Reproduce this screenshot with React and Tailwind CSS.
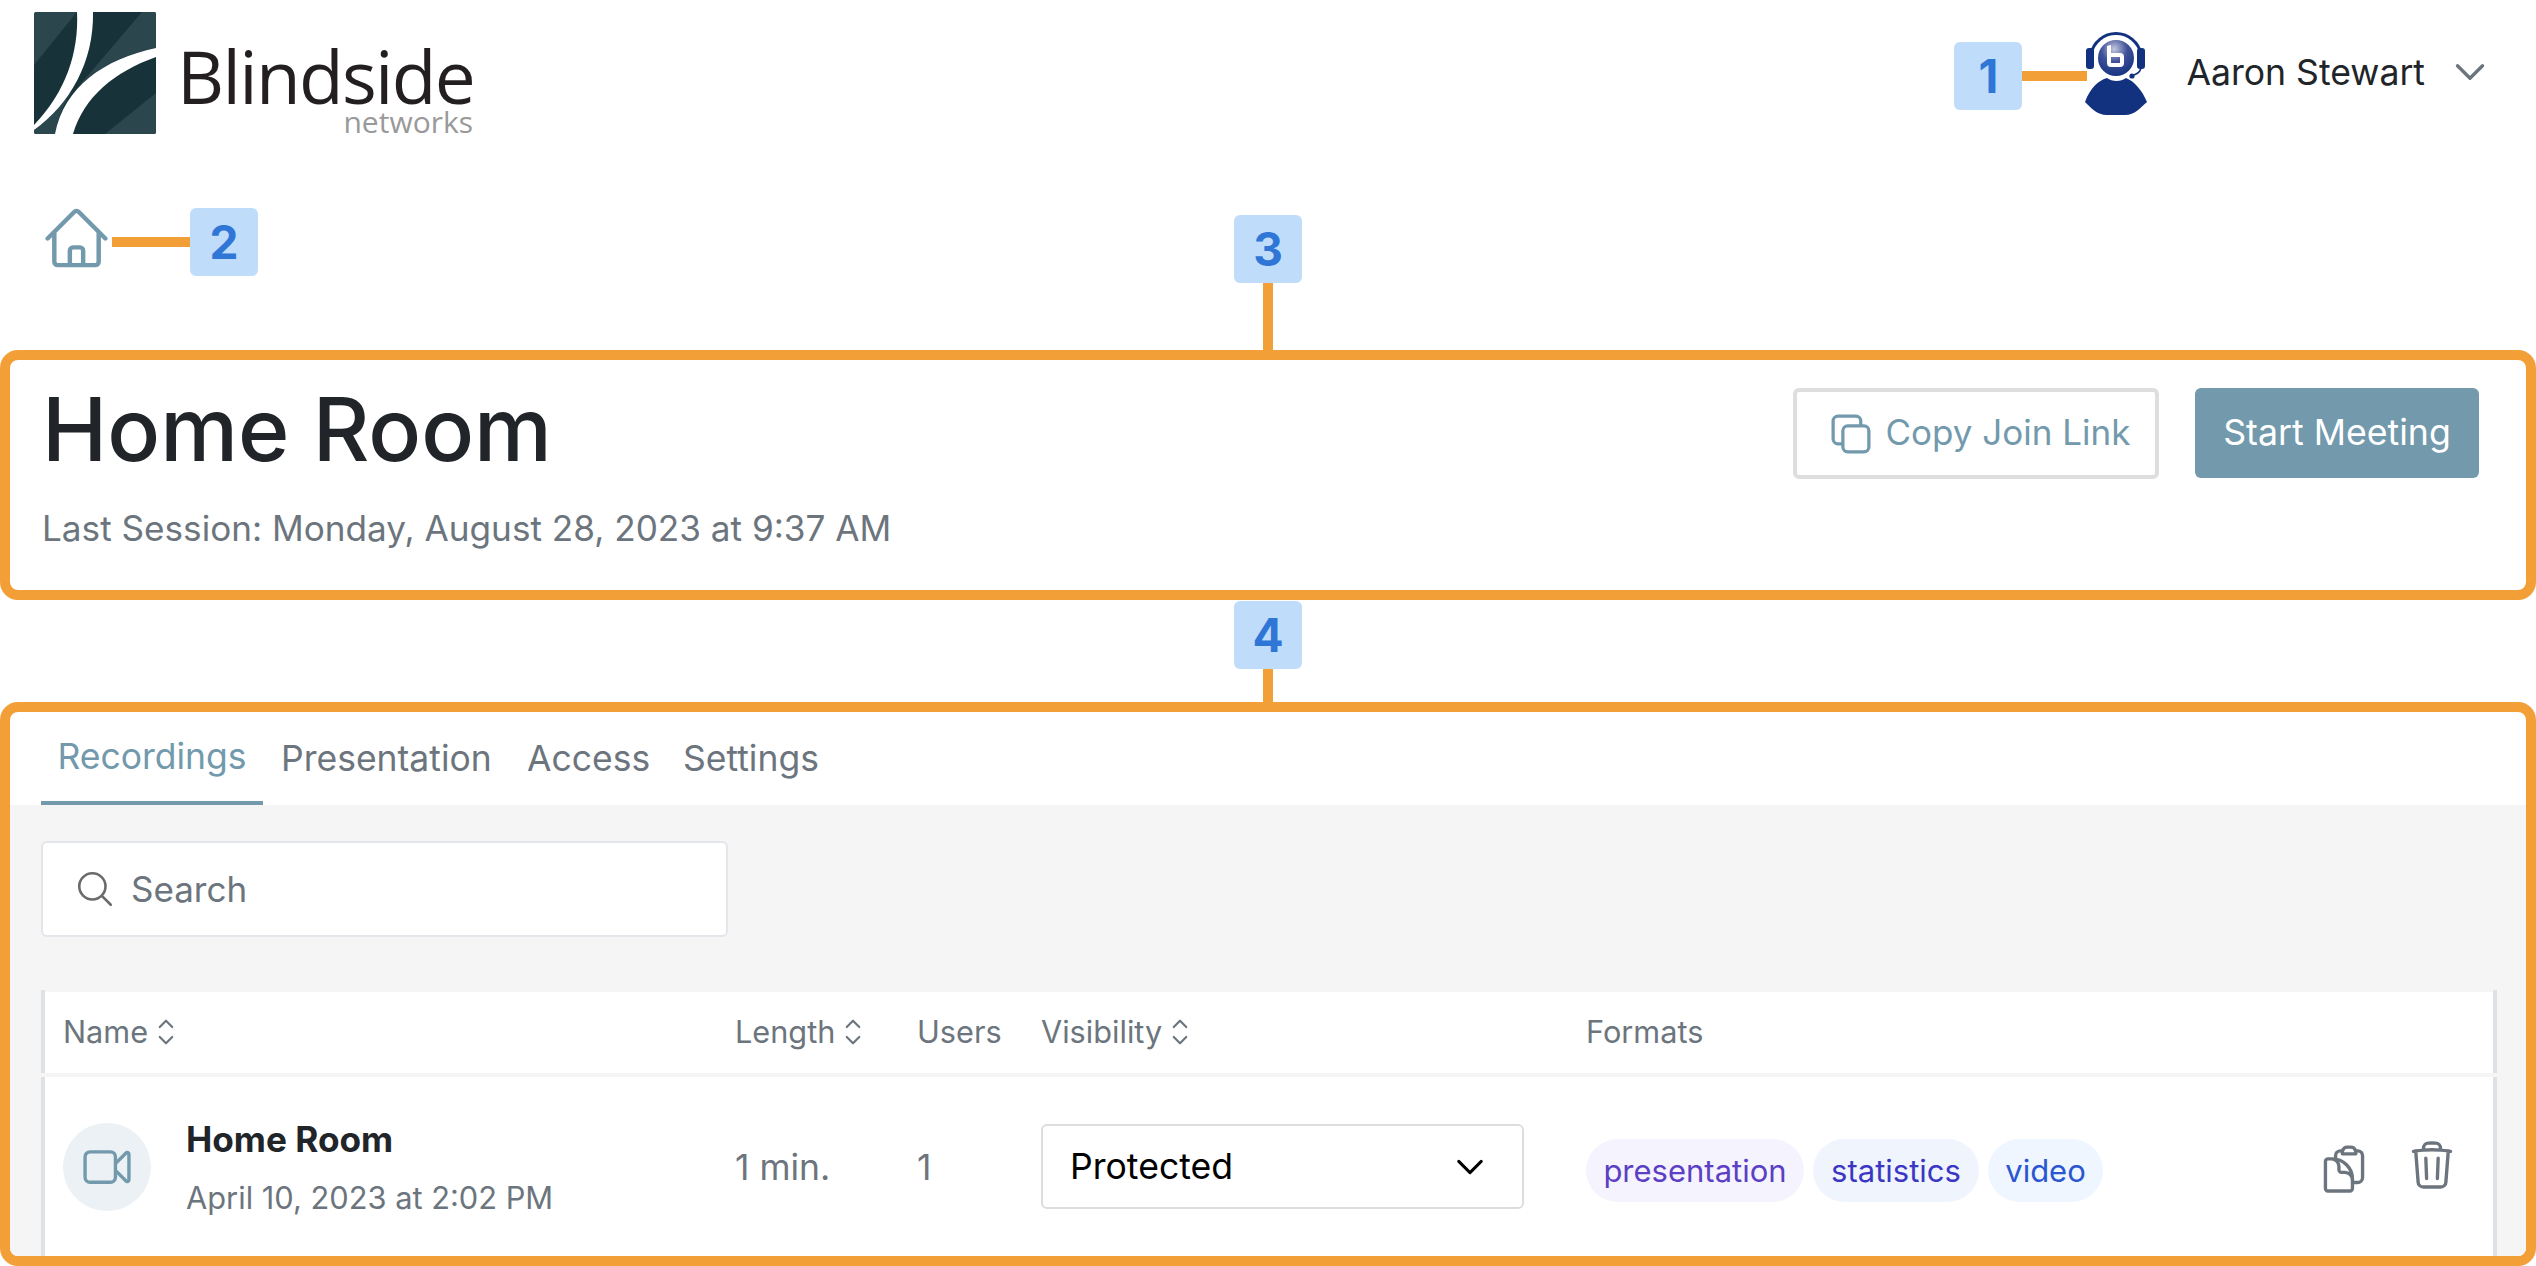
import React from "react";

const Icon = ({ d, className = "", sw = 1.5 }) => (
  <svg viewBox="0 0 24 24" fill="none" stroke="currentColor" strokeWidth={sw} strokeLinecap="round" strokeLinejoin="round" className={className}>
    <path d={d} />
  </svg>
);

const HOME = "m2.25 12 8.954-8.955c.44-.439 1.152-.439 1.591 0L21.75 12M4.5 9.75v10.125c0 .621.504 1.125 1.125 1.125H9.75v-4.875c0-.621.504-1.125 1.125-1.125h2.25c.621 0 1.125.504 1.125 1.125V21h4.125c.621 0 1.125-.504 1.125-1.125V9.75M8.25 21h8.25";
const COPY = "M16.5 8.25V6a2.25 2.25 0 0 0-2.25-2.25H6A2.25 2.25 0 0 0 3.75 6v8.25A2.25 2.25 0 0 0 6 16.5h2.25m8.25-8.25H18a2.25 2.25 0 0 1 2.25 2.25V18A2.25 2.25 0 0 1 18 20.25h-7.5A2.25 2.25 0 0 1 8.25 18v-1.5m8.25-8.25h-6a2.25 2.25 0 0 0-2.25 2.25v6";
const VIDEO = "m15.75 10.5 4.72-4.72a.75.75 0 0 1 1.28.53v11.38a.75.75 0 0 1-1.28.53l-4.72-4.72M4.5 18.75h9a2.25 2.25 0 0 0 2.25-2.25v-9a2.25 2.25 0 0 0-2.25-2.25h-9A2.25 2.25 0 0 0 2.25 7.5v9a2.25 2.25 0 0 0 2.25 2.25Z";
const SEARCH = "m21 21-5.197-5.197m0 0A7.5 7.5 0 1 0 5.196 5.196a7.5 7.5 0 0 0 10.607 10.607Z";
const TRASH = "m14.74 9-.346 9m-4.788 0L9.26 9m9.968-3.21c.342.052.682.107 1.022.166m-1.022-.165L18.16 19.673a2.25 2.25 0 0 1-2.244 2.077H8.084a2.25 2.25 0 0 1-2.244-2.077L4.772 5.79m14.456 0a48.108 48.108 0 0 0-3.478-.397m-12 .562c.34-.059.68-.114 1.022-.165m0 0a48.11 48.11 0 0 1 3.478-.397m7.5 0v-.916c0-1.18-.91-2.164-2.09-2.201a51.964 51.964 0 0 0-3.32 0c-1.18.037-2.09 1.022-2.09 2.201v.916m7.5 0a48.667 48.667 0 0 0-7.5 0";
const CLIP = "M8.25 7.5V6.108c0-1.135.845-2.098 1.976-2.192.373-.03.748-.057 1.123-.08M15.75 18H18a2.25 2.25 0 0 0 2.25-2.25V6.108c0-1.135-.845-2.098-1.976-2.192a48.424 48.424 0 0 0-1.123-.08M15.75 18.75v-1.875a3.375 3.375 0 0 0-3.375-3.375h-1.5a1.125 1.125 0 0 1-1.125-1.125v-1.5A3.375 3.375 0 0 0 6.375 7.5H5.25m11.9-3.664A2.251 2.251 0 0 0 15 2.25h-1.5a2.251 2.251 0 0 0-2.15 1.586m5.8 0c.065.21.1.433.1.664v.75h-6V4.5c0-.231.035-.454.1-.664M6.75 7.5H4.875c-.621 0-1.125.504-1.125 1.125v12c0 .621.504 1.125 1.125 1.125h9.75c.621 0 1.125-.504 1.125-1.125V16.5a9 9 0 0 0-9-9Z";
const CHEV = "m19.5 8.25-7.5 7.5-7.5-7.5";
const UPDOWN = "M8.25 15 12 18.75 15.75 15m-7.5-6L12 5.25 15.75 9";

const Badge = ({ n }) => (
  <div className="w-[68px] h-[68px] rounded-[6px] bg-[#bfdcfb] flex items-center justify-center text-[46px] font-bold text-[#2f76d6] leading-none shrink-0">{n}</div>
);

const Logo = () => (
  <svg viewBox="0 0 122 122" className="w-[122px] h-[122px] shrink-0">
    <rect width="122" height="122" rx="2" fill="#183239" />
    <path d="M2 0H43L0 53V2Z M108 0H120Q122 0 122 2V36C90 42 65 55 44 75Z M0 118L35 82L40 78C30 90 24 105 21 122H2Q0 122 0 120Z M122 81V120Q122 122 120 122H71Z" fill="#2b464d" />
    <path d="M43 0C45 40 32 80 0 113V118C36 92 60 50 59 0Z" fill="#fff" />
    <path d="M122 36C70 47 30 75 21 122H39C50 85 80 60 122 45Z" fill="#fff" />
  </svg>
);

const Avatar = () => (
  <svg viewBox="0 0 62 85" className="w-[62px] h-[85px] shrink-0">
    <defs>
      <radialGradient id="g" cx="0.45" cy="0.25" r="0.8">
        <stop offset="0" stopColor="#c3c8de" />
        <stop offset="0.45" stopColor="#3f5198" />
        <stop offset="1" stopColor="#12317f" />
      </radialGradient>
    </defs>
    <path d="M0 72C5 58 14 50 22 48C27 52 36 52 41 48C49 51 57 60 62 72C55 78 50 85 40 85H22C12 85 6 78 0 72Z" fill="#12317f" />
    <path d="M6 24A25.5 25.5 0 0 1 56 24" fill="none" stroke="#12317f" strokeWidth="3" />
    <rect x="1" y="18" width="8" height="21" rx="3" fill="#12317f" />
    <rect x="52" y="18" width="8" height="21" rx="3" fill="#12317f" />
    <circle cx="31" cy="28" r="18" fill="url(#g)" />
    <path d="M56 38C55 42 52 44 49 45" fill="none" stroke="#12317f" strokeWidth="1.6" />
    <circle cx="47" cy="46" r="2.6" fill="#12317f" />
    <path d="M22 16L26 15V23H35Q39 23 39 27V33Q39 37 35 37H26Q22 37 22 33Z M26 27V33H35V27Z" fill="#fff" fillRule="evenodd" />
  </svg>
);

const Sort = ({ children }) => (
  <div className="flex items-center">
    {children}
    <Icon d={UPDOWN} className="w-[40px] h-[40px] text-[#6c757d] -ml-[2px]" sw={1.3} />
  </div>
);

const Pill = ({ label, cls }) => (
  <span className={`h-[63px] pt-[2px] rounded-[32px] flex items-center justify-center text-[31px] ${cls}`}>{label}</span>
);

export default function App() {
  return (
    <div className="w-[2536px] h-[1266px] overflow-hidden bg-white font-['Inter',sans-serif] text-[#212529]">
      <header className="h-[200px] flex items-start justify-between pt-[12px] pl-[34px] pr-[46px]">
        <div className="flex items-start">
          <Logo />
          <div className="ml-[21px] mt-[31px] flex flex-col items-end font-['Open_Sans',sans-serif]">
            <span className="text-[73px] leading-[66px] text-[#231f20] tracking-[-1.7px]">Blindside</span>
            <span className="text-[30px] leading-[26px] text-[#999999] mr-[1px]">networks</span>
          </div>
        </div>
        <div className="flex items-start mt-[18px]">
          <div className="flex items-center mt-[12px]">
            <Badge n="1" />
            <div className="w-[65px] h-[10px] bg-[#f29f38] -mr-[2px]" />
          </div>
          <Avatar />
          <span className="ml-[39px] text-[35.6px] leading-[85px] text-[#212529]">Aaron Stewart</span>
          <Icon d={CHEV} sw={2} className="ml-[25px] w-[40px] h-[40px] mt-[22px] text-[#6c757d]" />
        </div>
      </header>

      <div className="h-[150px] grid grid-cols-[1234px_68px_1fr]">
        <div className="flex items-start pl-[41px] pt-[8px]">
          <div className="flex items-center">
            <Icon d={HOME} className="w-[71px] h-[71px] text-[#7299ac] -mt-[8px]" />
            <div className="w-[78px] h-[10px] bg-[#f29f38]" />
            <Badge n="2" />
          </div>
        </div>
        <div className="flex flex-col items-center justify-end">
          <Badge n="3" />
          <div className="w-[10px] h-[67px] bg-[#f29f38]" />
        </div>
      </div>

      <section className="h-[250px] border-[10px] border-[#f29f38] rounded-[18px] flex justify-between pl-[32px] pr-[47px]">
        <div>
          <h1 className="text-[87.6px] leading-[106px] font-medium mt-[16px]">Home Room</h1>
          <p className="text-[35.15px] leading-[54px] text-[#6c757d] mt-[19px]">Last Session: Monday, August 28, 2023 at 9:37 AM</p>
        </div>
        <div className="flex items-start gap-[36px] pt-[28px]">
          <button className="w-[366px] h-[91px] border-[4px] border-[#dedede] rounded-[6px] flex items-center justify-center gap-[9px] pb-[2px] text-[35px] text-[#7299ac]">
            <Icon d={COPY} className="w-[52px] h-[52px] ml-[3px] mt-[2px]" />
            Copy Join Link
          </button>
          <button className="w-[284px] h-[90px] bg-[#7299ac] rounded-[6px] text-[35.7px] text-white">Start Meeting</button>
        </div>
      </section>

      <div className="h-[102px] flex flex-col items-center pt-[1px]">
        <Badge n="4" />
        <div className="w-[10px] h-[33px] bg-[#f29f38]" />
      </div>

      <section className="h-[564px] border-[10px] border-[#f29f38] rounded-[18px] overflow-hidden flex flex-col">
        <nav className="h-[93px] shrink-0 flex pl-[31px] text-[35.5px] text-[#6c757d]">
          <div className="w-[222px] h-full flex items-center justify-center border-b-[4px] border-[#7299ac] text-[#7299ac]">Recordings</div>
          <div className="w-[264px] pl-[18px] flex items-center h-full">Presentation</div>
          <div className="w-[156px] flex items-center h-full">Access</div>
          <div className="flex items-center h-full">Settings</div>
        </nav>
        <div className="flex-1 bg-[#f5f5f5] pl-[31px] pr-[29px] pt-[36px] overflow-hidden">
          <div className="w-[687px] h-[96px] bg-white border-2 border-[#e2e5e9] rounded-[6px] flex items-center pl-[31px] text-[35px] text-[#6c757d]">
            <Icon d={SEARCH} sw={1.5} className="w-[42px] h-[42px] text-[#6b6b6b]" />
            <span className="ml-[15px]">Search</span>
          </div>
          <div className="mt-[53px] border-x-[4px] border-[#dee2e6] pt-[2px]">
            <div className="h-[81px] bg-white grid grid-cols-[672px_182px_124px_545px_1fr] items-center pl-[18px] text-[30.7px] text-[#6c757d]">
              <Sort>Name</Sort>
              <Sort>Length</Sort>
              <div>Users</div>
              <Sort>Visibility</Sort>
              <div>Formats</div>
            </div>
            <div className="h-[4px] bg-[#f5f5f5] -mx-[4px]" />
            <div className="h-[179px] bg-white grid grid-cols-[672px_182px_124px_545px_1fr] items-center pl-[18px] text-[#6c757d]">
              <div className="flex items-center">
                <div className="w-[88px] h-[88px] rounded-full bg-[#ebf1f4] flex items-center justify-center text-[#7299ac]">
                  <Icon d={VIDEO} className="w-[54px] h-[54px]" />
                </div>
                <div className="ml-[35px] mt-[2px]">
                  <div className="text-[35.2px] leading-[48px] font-bold text-[#212529]">Home Room</div>
                  <div className="text-[30.8px] leading-[44px] mt-[13px]">April 10, 2023 at 2:02 PM</div>
                </div>
              </div>
              <div className="text-[35.5px] pt-[2px]">1 min.</div>
              <div className="text-[35.5px] pt-[2px]">1</div>
              <div className="w-[483px] h-[85px] border-2 border-[#dddddd] rounded-[6px] flex items-center justify-between pl-[27px] pr-[34px] text-[35.6px] text-black">
                Protected
                <Icon d={CHEV} sw={2} className="w-[36px] h-[36px]" />
              </div>
              <div className="flex items-center justify-between pr-[34px]">
                <div className="flex gap-[9px] mt-[8px]">
                  <Pill label="presentation" cls="w-[218px] bg-[#f5f3fe] text-[#5b3fc4]" />
                  <Pill label="statistics" cls="w-[166px] bg-[#eff4fd] text-[#3b37c4]" />
                  <Pill label="video" cls="w-[115px] bg-[#eff6ff] text-[#2a56d0]" />
                </div>
                <div className="flex gap-[34px]">
                  <Icon d={CLIP} className="w-[54px] h-[54px] text-[#6c757d] mt-[4px]" />
                  <Icon d={TRASH} className="w-[54px] h-[54px] text-[#6c757d]" />
                </div>
              </div>
            </div>
          </div>
        </div>
      </section>
    </div>
  );
}
